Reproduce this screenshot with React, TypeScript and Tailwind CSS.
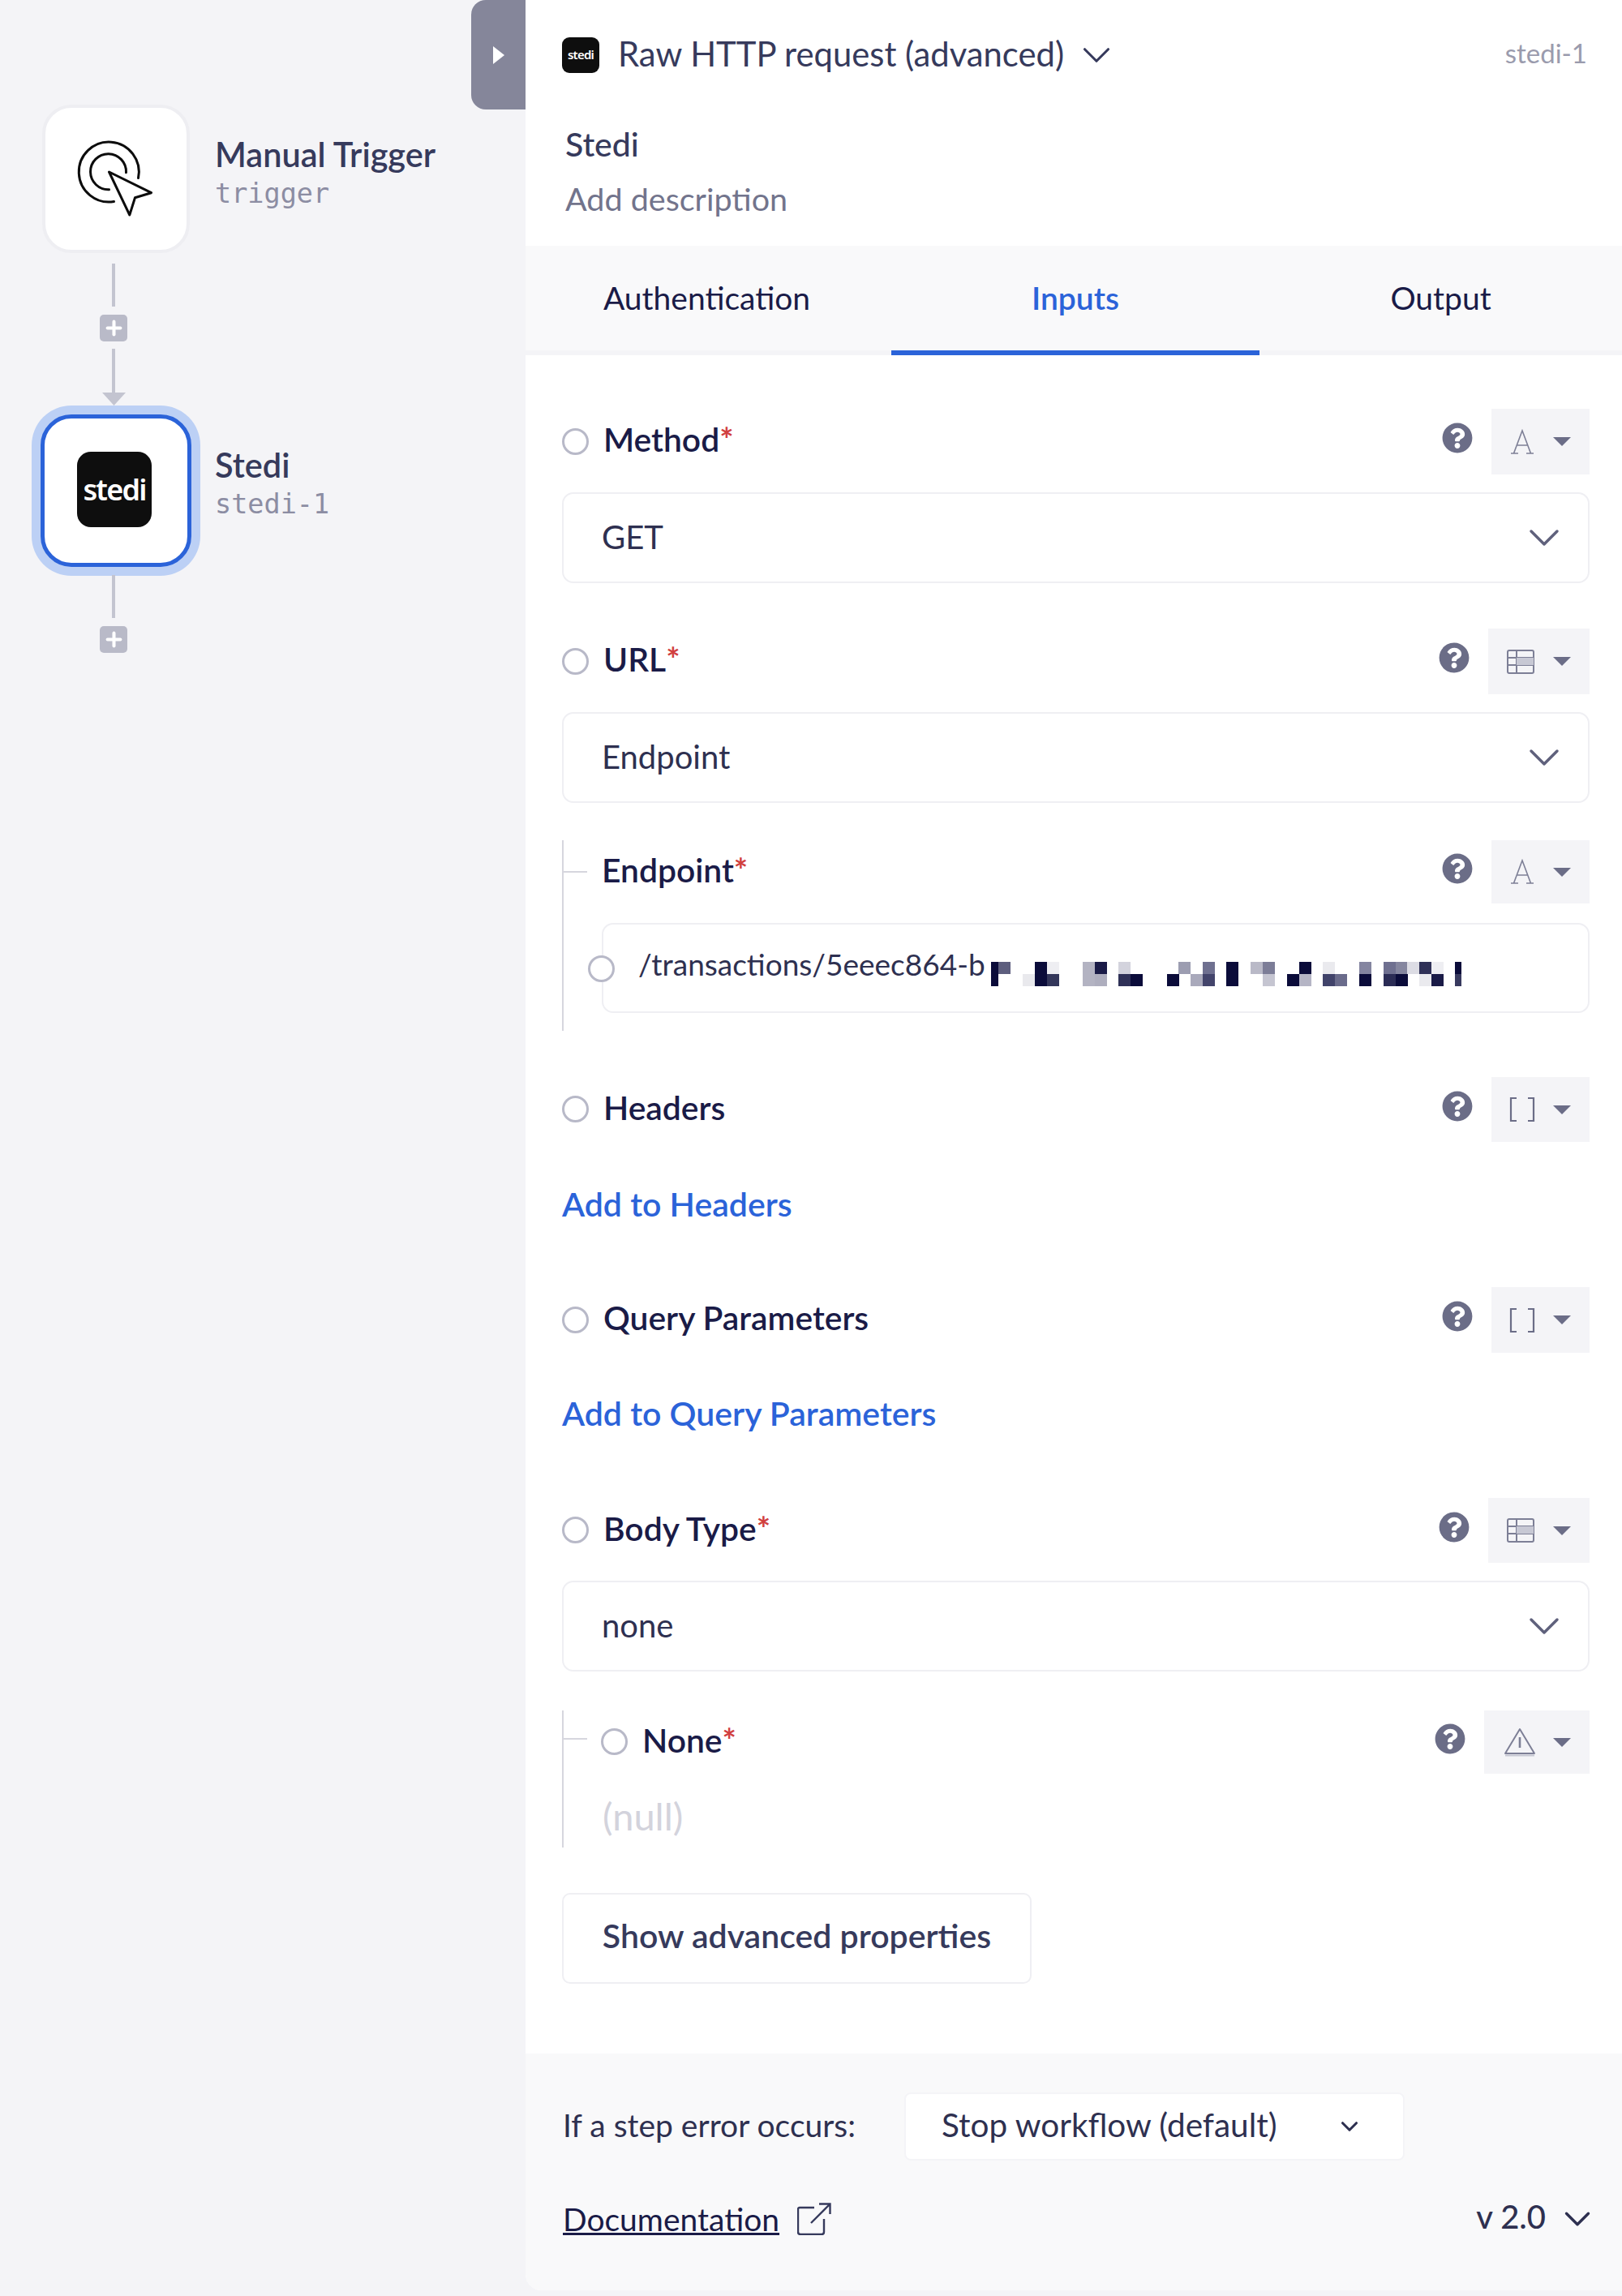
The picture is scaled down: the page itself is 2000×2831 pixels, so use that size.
import React from 'react';
import { ChevronDown, Plus } from 'lucide-react';
import { FaQuestionCircle } from 'react-icons/fa';

const font = "font-['Lato','Noto_Sans',sans-serif]";

function StediLogo({ box, text }: { box: string; text: string }) {
  return (
    <div className={`flex items-center justify-center bg-[#0e0e0e] text-white font-semibold font-['Noto_Sans',sans-serif] tracking-tighter ${box} ${text}`}>
      stedi
    </div>
  );
}

function AddStep() {
  return (
    <div className="w-[34px] h-[33px] rounded-[5px] bg-[#b9bac8] flex items-center justify-center">
      <Plus size={27} strokeWidth={3.6} className="text-white" />
    </div>
  );
}

function Line({ h }: { h: string }) {
  return <div className={`w-[4px] bg-[#c3c4d0] ${h}`} />;
}

function TriggerIcon() {
  return (
    <svg width="130" height="130" viewBox="17.5 15 130 130" fill="none" stroke="#0c0c0c" strokeWidth="3" strokeLinejoin="round" strokeLinecap="round">
      <path d="M80 107.5A37 37 0 1 1 110 78.5" />
      <path d="M74 92.7A22 22 0 1 1 95 71.7" />
      <path d="M74 71L126 96.7L106 102.7L99.3 124Z" />
    </svg>
  );
}

function Caret() {
  return (
    <svg width="22" height="11" viewBox="0 0 22 11" className="shrink-0">
      <path d="M0 0H22L11 11Z" fill="#6b6d87" />
    </svg>
  );
}

function TextIcon() {
  return (
    <svg width="30" height="32" viewBox="0 0 30 32" fill="none" stroke="#7d7f96" strokeWidth="1.6">
      <path d="M1 30H10M20 30H29M4.5 30L15 2L25.5 30M8 20H22" />
    </svg>
  );
}

function TableIcon() {
  return (
    <svg width="34" height="30" viewBox="0 0 34 30" fill="none" stroke="#7d7f96" strokeWidth="2">
      <rect x="1" y="1" width="32" height="28" rx="2" />
      <path d="M1 10H33M1 19H33M12 1V29" />
      <path d="M12 10H33V19H12Z" fill="#c7c8d4" stroke="none" />
    </svg>
  );
}

function ArrayIcon() {
  return (
    <svg width="32" height="32" viewBox="0 0 32 32" fill="none" stroke="#6b6d87" strokeWidth="2.2">
      <path d="M9 2H2V30H9M23 2H30V30H23" />
    </svg>
  );
}

function WarningIcon() {
  return (
    <svg width="40" height="36" viewBox="0 0 40 36" fill="none" stroke="#7d7f96" strokeWidth="2" strokeLinejoin="round">
      <path d="M20 2L38 32H2Z" />
      <path d="M20 12V25" strokeWidth="2.6" />
      <path d="M2 34.5H38" stroke="#c4c5d1" />
    </svg>
  );
}

function Radio({ className = '' }: { className?: string }) {
  return <div className={`w-[33px] h-[33px] rounded-full border-[3px] border-[#b8b9c8] bg-white shrink-0 ${className}`} />;
}

function TypeMenu({ icon, width, gap }: { icon: React.ReactNode; width: string; gap: string }) {
  return (
    <div className="flex items-center gap-[23px]">
      <FaQuestionCircle size={38} className="text-[#6b6d87] mb-[9px]" />
      <div className={`h-full flex items-center justify-end pr-[23px] bg-[#f4f4f7] ${width} ${gap}`}>
        {icon}
        <Caret />
      </div>
    </div>
  );
}

function Label({ text, required }: { text: string; required?: boolean }) {
  return (
    <div className="pb-[4px] text-[40.8px] leading-none font-semibold text-[#1a1b47]">
      {text}
      {required && <span className="font-bold text-[#d1403f]">*</span>}
    </div>
  );
}

function FieldRow({ label, required, menu, height = 'h-[81px]' }: { label: string; required?: boolean; menu: React.ReactNode; height?: string }) {
  return (
    <div className={`flex items-center justify-between ${height}`}>
      <div className="flex items-center gap-[18px]">
        <Radio />
        <Label text={label} required={required} />
      </div>
      <div className="h-full flex">{menu}</div>
    </div>
  );
}

function Select({ value }: { value: string }) {
  return (
    <div className="h-[112px] mt-[22px] rounded-[14px] border-2 border-[#efeff3] flex items-center justify-between pl-[47px] pr-[22px]">
      <span className="pb-[3px] text-[40px] text-[#2e3050]">{value}</span>
      <ChevronDown size={64} strokeWidth={1.3} className="text-[#5f617c]" />
    </div>
  );
}

const menuText = <TypeMenu icon={<TextIcon />} width="w-[121px]" gap="gap-[23px]" />;
const menuTable = <TypeMenu icon={<TableIcon />} width="w-[125px]" gap="gap-[23px]" />;
const menuArray = <TypeMenu icon={<ArrayIcon />} width="w-[121px]" gap="gap-[22px]" />;
const menuWarning = <TypeMenu icon={<WarningIcon />} width="w-[130px]" gap="gap-[21px]" />;

// blurred part of the endpoint url
const redaction: [number, number, number, string][] = [
  [1222, 0, 9, '#0b0c3a'], [1222, 1, 9, '#0b0c3a'], [1231, 0, 15, '#5d5e7e'],
  [1261, 1, 15, '#e9e9ed'], [1276, 0, 15, '#0b0c3a'], [1276, 1, 15, '#0b0c3a'], [1291, 0, 15, '#eeeef2'], [1291, 1, 15, '#33365a'],
  [1335, 0, 15, '#b3b3c2'], [1335, 1, 15, '#b3b3c2'], [1350, 0, 15, '#1a1b47'], [1350, 1, 15, '#aeaebe'],
  [1379, 0, 15, '#d3d3dd'], [1379, 1, 15, '#2f3157'], [1394, 1, 15, '#0b0c3a'],
  [1439, 1, 15, '#0b0c3a'], [1453, 0, 15, '#9c9db1'], [1468, 1, 15, '#a9a9bb'], [1483, 0, 15, '#6f7090'], [1483, 1, 15, '#43446b'],
  [1512, 0, 15, '#0b0c3a'], [1512, 1, 15, '#0b0c3a'], [1542, 0, 15, '#b9b9c7'], [1557, 0, 15, '#7c7d97'], [1557, 1, 15, '#c5c5d1'],
  [1587, 1, 15, '#0b0c3a'], [1602, 0, 15, '#0b0c3a'], [1602, 1, 15, '#b5b5c5'],
  [1631, 0, 15, '#eaeaee'], [1631, 1, 15, '#41436a'], [1646, 1, 15, '#6a6b8b'],
  [1676, 0, 15, '#8485a0'], [1676, 1, 15, '#0b0c3a'],
  [1706, 0, 15, '#6f7090'], [1706, 1, 15, '#2b2c55'], [1721, 0, 15, '#85869f'], [1721, 1, 15, '#0b0c3a'], [1735, 0, 15, '#dcdce4'],
  [1750, 0, 15, '#2f3157'], [1750, 1, 15, '#eaeaee'], [1765, 0, 15, '#eeeef2'], [1765, 1, 15, '#1a1b47'],
  [1794, 0, 8, '#0b0c3a'], [1794, 1, 8, '#383a5f'],
];

function Redaction() {
  return (
    <svg width="580" height="30" viewBox="1222 0 580 30" className="absolute left-[478px] top-[46px]">
      {redaction.map(([x, row, w, fill], i) => (
        <rect key={i} x={x} y={row * 15} width={w} height="15" fill={fill} />
      ))}
    </svg>
  );
}

function Workflow() {
  return (
    <div className="relative w-[648px] shrink-0 pt-[129px] pl-[52px] text-[#363a5c]">
      <div className="absolute right-0 top-0 w-[67px] h-[135px] rounded-l-[18px] bg-[#85869a] flex items-center justify-center">
        <svg width="14" height="22" viewBox="0 0 14 22"><path d="M0 0L14 11L0 22Z" fill="#fff" /></svg>
      </div>

      <div className="flex gap-[31px]">
        <div className="w-[182px] h-[183px] rounded-[36px] bg-white border-[4px] border-[#eeeef2] flex items-center justify-center">
          <TriggerIcon />
        </div>
        <div className="pt-[38px]">
          <div className="text-[41.5px] leading-[46px] font-semibold">Manual Trigger</div>
          <div className="text-[33.5px] leading-[52px] text-[#8c8da3] font-['DejaVu_Sans_Mono',monospace]">trigger</div>
        </div>
      </div>

      <div className="w-[34px] ml-[71px] mt-[13px] flex flex-col items-center">
        <Line h="h-[53px]" />
        <div className="mt-[10px]"><AddStep /></div>
        <div className="mt-[9px]"><Line h="h-[54px]" /></div>
        <svg width="29" height="16" viewBox="0 0 29 16"><path d="M0 0H29L14.5 16Z" fill="#c3c4d0" /></svg>
      </div>

      <div className="flex gap-[29px] -ml-[2px] mt-[11px]">
        <div className="w-[186px] h-[188px] rounded-[38px] bg-white border-[5px] border-[#2b63d9] shadow-[0_0_0_11px_#bcd0f5] flex items-center justify-center">
          <StediLogo box="w-[92px] h-[93px] rounded-[17px] mr-[4px] mb-[3px]" text="text-[36px]" />
        </div>
        <div className="pt-[39px]">
          <div className="text-[41.5px] leading-[46px] font-semibold">Stedi</div>
          <div className="text-[33.5px] leading-[52px] text-[#8c8da3] font-['DejaVu_Sans_Mono',monospace]">stedi-1</div>
        </div>
      </div>

      <div className="w-[34px] ml-[71px] mt-[10px] flex flex-col items-center">
        <Line h="h-[53px]" />
        <div className="mt-[10px]"><AddStep /></div>
      </div>
    </div>
  );
}

function Header() {
  return (
    <div className="h-[303px] pl-[45px] pr-[43px]">
      <div className="h-[135px] flex items-center justify-between">
        <div className="flex items-center gap-[23px]">
          <StediLogo box="w-[46px] h-[44px] rounded-[9px]" text="text-[15px]" />
          <span className="pb-[3px] text-[41.8px] text-[#363a5c]">Raw HTTP request (advanced)</span>
          <ChevronDown size={58} strokeWidth={1.3} className="text-[#363a5c] -ml-[12px]" />
        </div>
        <span className="pb-[3px] text-[33px] text-[#9a9bad]">stedi-1</span>
      </div>
      <div className="pl-[4px] mt-[20px] text-[41px] leading-[46px] font-medium text-[#363a5c]">Stedi</div>
      <div className="pl-[4px] mt-[21px] text-[39.5px] leading-[46px] text-[#72748c]">Add description</div>
    </div>
  );
}

function Tabs() {
  return (
    <div className="grid grid-cols-[451px_454px_1fr] h-[135px] bg-[#f9f9fa] border-b-[6px] border-[#f4f4f7] text-[39px] text-[#1a1b47]">
      <div className="flex items-center justify-center pr-[4px]">Authentication</div>
      <div className="flex items-center justify-center -mb-[6px] border-b-[6px] border-[#2b63d9] text-[#2b63d9] font-semibold">Inputs</div>
      <div className="flex items-center justify-center">Output</div>
    </div>
  );
}

function AddLink({ text, className }: { text: string; className: string }) {
  return <div className={`text-[41px] leading-[46px] font-semibold text-[#2b63d9] ${className}`}>{text}</div>;
}

function Form() {
  return (
    <div className="flex-1 pl-[45px] pr-[40px] pt-[66px]">
      <FieldRow label="Method" required menu={menuText} />
      <Select value="GET" />

      <div className="mt-[56px]">
        <FieldRow label="URL" required menu={menuTable} />
        <Select value="Endpoint" />
      </div>

      <div className="mt-[46px] h-[235px] border-l-2 border-[#d6d6de]">
        <div className="flex items-center justify-between h-[78px]">
          <div className="flex items-center gap-[18px]">
            <div className="w-[29px] h-[2px] bg-[#d6d6de]" />
            <Label text="Endpoint" required />
          </div>
          <div className="h-full flex">{menuText}</div>
        </div>
        <div className="relative ml-[47px] mt-[24px] h-[111px] rounded-[14px] border-2 border-[#efeff3] flex items-center pl-[43px]">
          <Radio className="absolute -left-[19px] top-[38px]" />
          <span className="text-[37px] text-[#2e3050] -mt-[10px]">/transactions/5eeec864-b</span>
          <Redaction />
        </div>
      </div>

      <div className="mt-[57px]">
        <FieldRow label="Headers" menu={menuArray} height="h-[80px]" />
      </div>
      <AddLink text="Add to Headers" className="mt-[54px]" />

      <div className="mt-[79px]">
        <FieldRow label="Query Parameters" menu={menuArray} />
      </div>
      <AddLink text="Add to Query Parameters" className="mt-[52px]" />

      <div className="mt-[81px]">
        <FieldRow label="Body Type" required menu={menuTable} height="h-[80px]" />
      </div>
      <Select value="none" />

      <div className="mt-[48px] h-[169px] border-l-2 border-[#d6d6de]">
        <div className="flex items-center justify-between h-[78px]">
          <div className="flex items-center">
            <div className="w-[29px] h-[2px] bg-[#d6d6de] -mt-[8px]" />
            <Radio className="ml-[17px]" />
            <div className="ml-[18px]"><Label text="None" required /></div>
          </div>
          <div className="h-full flex">{menuWarning}</div>
        </div>
        <div className="ml-[48px] mt-[29px] text-[47px] leading-[46px] text-[#d3d3dc]">(null)</div>
      </div>

      <div className="mt-[56px] w-[579px] h-[112px] rounded-[10px] border-2 border-[#efeff3] flex items-center justify-center pb-[6px] text-[41px] font-semibold text-[#363a5c]">
        Show advanced properties
      </div>
    </div>
  );
}

function Footer() {
  return (
    <div className="h-[292px] bg-[#f9f9fa] rounded-bl-[20px] pl-[46px] pr-[40px] pt-[48px] text-[#2e3050]">
      <div className="flex items-center gap-[60px]">
        <span className="pb-[3px] text-[39px]">If a step error occurs:</span>
        <div className="w-[617px] h-[84px] rounded-[8px] bg-white border-2 border-[#f4f4f7] flex items-center justify-between pl-[44px] pr-[49px] text-[40.5px]">
          <span className="pb-[3px]">Stop workflow (default)</span>
          <ChevronDown size={34} strokeWidth={2.2} />
        </div>
      </div>
      <div className="flex items-center justify-between mt-[39px]">
        <div className="flex items-center gap-[22px]">
          <span className="text-[39px] underline text-[#1a1b47]">Documentation</span>
          <svg width="42" height="40" viewBox="0 0 42 40" fill="none" stroke="#363a5c" strokeWidth="2.4">
            <path d="M21 6H3Q1 6 1 8V36Q1 39 4 39H30Q33 39 33 36V20M17 25L40 2M27 1.5H40.5V14" />
          </svg>
        </div>
        <div className="flex items-center gap-[12px] -mr-[12px]">
          <span className="pb-[6px] text-[40px] font-medium">v 2.0</span>
          <ChevronDown size={54} strokeWidth={1.5} />
        </div>
      </div>
    </div>
  );
}

export default function App() {
  return (
    <div className={`flex w-[2000px] h-[2831px] bg-[#f4f4f7] ${font}`}>
      <Workflow />
      <div className="flex-1 h-[2824px] flex flex-col bg-white rounded-bl-[20px]">
        <Header />
        <Tabs />
        <Form />
        <Footer />
      </div>
    </div>
  );
}
